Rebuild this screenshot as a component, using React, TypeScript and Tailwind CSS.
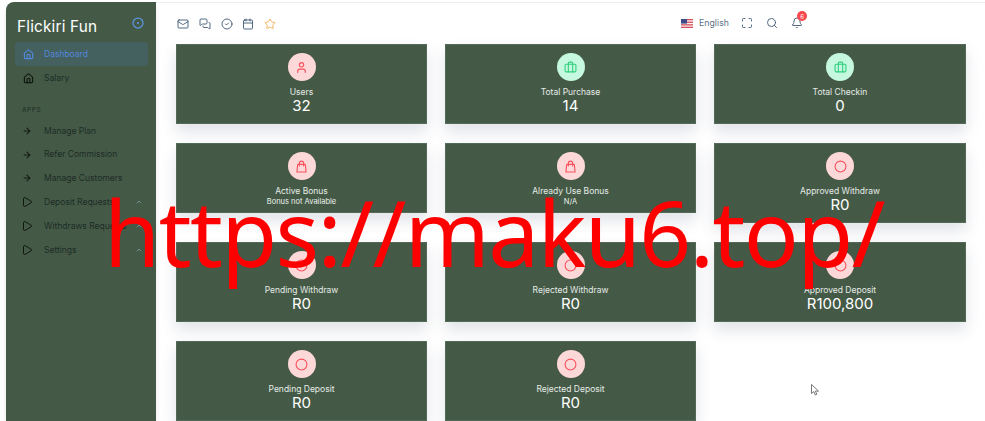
import {
  ArrowRight,
  Bell,
  Briefcase,
  Calendar,
  ChevronUp,
  Circle,
  CircleCheck,
  CircleDot,
  Home,
  Mail,
  Maximize,
  MessagesSquare,
  Play,
  Search,
  Star,
  User,
} from "lucide-react";
import type { SVGProps } from "react";

// feather style bag: lucide's own has a smile on it
function Bag(props: SVGProps<SVGSVGElement>) {
  return (
    <svg viewBox="0 0 24 24" fill="none" stroke="currentColor" strokeLinecap="round" strokeLinejoin="round" {...props}>
      <path d="M5 8h14l1.5 14h-17z" />
      <path d="M8 11V6a4 4 0 0 1 8 0v5" />
    </svg>
  );
}

const sideLinks = [
  { label: "Manage Plan", icon: ArrowRight },
  { label: "Refer Commission", icon: ArrowRight },
  { label: "Manage Customers", icon: ArrowRight },
  { label: "Deposit Requests", icon: Play, caret: true },
  { label: "Withdraws Requests", icon: Play, caret: true },
  { label: "Settings", icon: Play, caret: true },
];

const cards = [
  { label: "Users", value: "32", icon: User, tone: "red" },
  { label: "Total Purchase", value: "14", icon: Briefcase, tone: "green" },
  { label: "Total Checkin", value: "0", icon: Briefcase, tone: "green" },
  { label: "Active Bonus", note: "Bonus not Available", icon: Bag, tone: "red" },
  { label: "Already Use Bonus", note: "N/A", icon: Bag, tone: "red" },
  { label: "Approved Withdraw", value: "R0", icon: Circle, tone: "red" },
  { label: "Pending Withdraw", value: "R0", icon: Circle, tone: "red" },
  { label: "Rejected Withdraw", value: "R0", icon: Circle, tone: "red" },
  { label: "Approved Deposit", value: "R100,800", icon: Circle, tone: "red" },
  { label: "Pending Deposit", value: "R0", icon: Circle, tone: "red" },
  { label: "Rejected Deposit", value: "R0", icon: Circle, tone: "red" },
];

function UsFlag() {
  return (
    <svg width="12" height="9" viewBox="0 0 12 9" aria-hidden>
      <rect width="12" height="9" fill="#f4f4f6" />
      <rect width="12" height="1.3" fill="#d8505c" />
      <rect y="2.6" width="12" height="1.3" fill="#d8505c" />
      <rect y="5.2" width="12" height="1.3" fill="#d8505c" />
      <rect y="7.7" width="12" height="1.3" fill="#d8505c" />
      <rect width="6" height="4.6" fill="#3d4a86" />
    </svg>
  );
}

function Sidebar() {
  return (
    <aside className="flex w-[150px] shrink-0 flex-col rounded-tl-lg bg-[#445a46] pt-[15px] shadow-md">
      <div className="flex items-center justify-between pl-[11px] pr-[12px]">
        <span className="text-[15.3px] leading-5 tracking-[0.2px] text-white">Flickiri Fun</span>
        <CircleDot className="mb-2 size-3 stroke-[2.5] text-[#5b93e0]" aria-hidden />
      </div>
      <nav className="mt-[5px] flex flex-col pl-[9px] pr-2">
        <a className="flex h-6 items-center gap-[10px] rounded-sm bg-[#44605f] pl-2 text-[8.5px] text-[#5288dc]">
          <Home className="size-[11px] stroke-[2.5]" aria-hidden />
          Dashboard
        </a>
        <a className="mt-[-1px] flex h-6 translate-y-[1px] items-center gap-[10px] pl-2 text-[8.5px] text-[#1e2b26]">
          <Home className="size-[11px] stroke-[2.5] text-[#10180f]" aria-hidden />
          Salary
        </a>
        <p className="mt-[14px] pl-[7px] text-[6.5px] tracking-[0.6px] leading-[14px] text-[#1e2b26]">APPS</p>
        <ul className="mt-[2px] flex flex-col">
          {sideLinks.map((link) => {
            const Icon = link.icon;
            return (
              <li key={link.label} className="flex h-[23.8px] items-center pl-[7px] text-[8.5px] text-[#1e2b26]">
                <span className="flex w-[10px] shrink-0 justify-center">
                  <Icon
                    className={`shrink-0 text-[#10180f] ${link.caret ? "size-3 stroke-2" : "size-[10px] stroke-[2.5]"}`}
                    aria-hidden
                  />
                </span>
                <span className="ml-[12px] flex-1 truncate">{link.label}</span>
                {link.caret && <ChevronUp className="mr-[5px] size-2 stroke-[2.5] text-[#7c93a3]" aria-hidden />}
              </li>
            );
          })}
        </ul>
      </nav>
    </aside>
  );
}

function Topbar() {
  const left = [Mail, MessagesSquare, CircleCheck, Calendar];
  return (
    <header className="flex h-[41px] items-center justify-between pl-[21px] pr-[182px]">
      <div className="flex items-center gap-[9.8px] text-[#3f5775]">
        {left.map((Icon, i) => (
          <Icon key={i} className="size-3 stroke-[1.8]" aria-hidden />
        ))}
        <Star className="size-3 stroke-[1.8] text-[#f2ac4e]" aria-hidden />
      </div>
      <div className="flex items-center text-[#5d6f85]">
        <UsFlag />
        <span className="ml-[6px] mr-[1px] text-[8.7px] tracking-[0.05px]">English</span>
        <Maximize className="ml-[11px] size-3 stroke-[1.8] text-[#3f5775]" aria-hidden />
        <Search className="ml-[13px] size-3 stroke-[1.8] text-[#3f5775]" aria-hidden />
        <div className="relative ml-[13px]">
          <Bell className="size-3 stroke-[1.8] text-[#3f5775]" aria-hidden />
          <span className="absolute -right-[4px] -top-[6px] flex size-[10px] items-center justify-center rounded-full bg-[#f8484e] text-[6px] text-white">
            6
          </span>
        </div>
      </div>
    </header>
  );
}

function StatCard({ card }: { card: (typeof cards)[number] }) {
  const Icon = card.icon;
  const isGreen = card.tone === "green";
  return (
    <div
      className={`flex flex-col items-center border border-[#6f8172]/40 bg-[#445a46] pt-[8px] text-white shadow-[0_8px_14px_rgba(70,80,110,0.16)] ${
        card.note ? "h-[70px]" : "h-[80px]"
      }`}
    >
      <div
        className={`flex size-7 items-center justify-center rounded-full ${
          isGreen ? "bg-[#c5f8de] text-[#2fd07f]" : "bg-[#fdd8d8] text-[#f9505c]"
        }`}
      >
        <Icon className="size-[13px] stroke-[2]" aria-hidden />
      </div>
      <p className="mt-[5px] text-[8.5px] leading-[13px] text-[#e6ebe6]">{card.label}</p>
      {card.note ? (
        <p className="-mt-[1px] text-[7.5px] leading-[9px] text-[#eef1ee]">{card.note}</p>
      ) : (
        <p className="-mt-[1px] text-[15px] leading-[16px]">{card.value}</p>
      )}
    </div>
  );
}

export default function App() {
  return (
    <div className="relative flex h-[421px] w-[985px] overflow-hidden bg-white font-['Inter',sans-serif]">
      <div className="flex w-full pl-[6px] pt-[2px]">
        <Sidebar />
        <main className="min-w-0 flex-1 border-t border-[#eeeef2]">
          <Topbar />
          <div className="grid grid-cols-[251px_251px_252px] items-start gap-x-[18px] gap-y-[19px] pl-[20px]">
            {cards.map((card) => (
              <StatCard key={card.label} card={card} />
            ))}
          </div>
        </main>
      </div>

      {/* watermark over the page */}
      <div className="pointer-events-none absolute left-[104px] top-[170px] whitespace-nowrap font-['Noto_Sans',sans-serif] text-[91px] leading-[124px] tracking-[-1.6px] text-[#ff0000]">
        https://maku6.top/
      </div>

      {/* mouse cursor */}
      <svg className="absolute left-[811px] top-[384px]" width="9" height="12" viewBox="0 0 9 12" aria-hidden>
        <path d="M0.5 0.5 V9.5 L2.8 7.6 L4.3 11 L5.8 10.3 L4.4 7.1 H7.5 Z" fill="#fff" stroke="#555" strokeWidth="0.8" />
      </svg>
    </div>
  );
}
